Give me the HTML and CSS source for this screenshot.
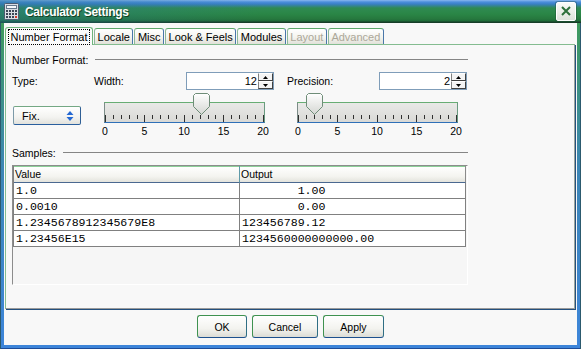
FILE: index.html
```html
<!DOCTYPE html>
<html lang="en">
<head>
    <meta charset="UTF-8">
    <title>Calculator Settings</title>
    <link rel="stylesheet" href="styles.css">
</head>
<body>
<div class="window">
    <div class="titlebar">
        <svg class="app-icon" width="17" height="17" viewBox="0 0 17 17">
            <rect x="1.5" y="0.5" width="14" height="16" rx="1" fill="#d9dee4" stroke="#4b5b70"/>
            <rect x="3.5" y="2.5" width="10" height="3" fill="#f5f8fb" stroke="#66788c"/>
            <g fill="#3c4656">
                <rect x="3" y="7" width="2" height="2"/><rect x="6" y="7" width="2" height="2"/><rect x="9" y="7" width="2" height="2"/><rect x="12" y="7" width="2" height="2"/>
                <rect x="3" y="10" width="2" height="2"/><rect x="6" y="10" width="2" height="2"/><rect x="9" y="10" width="2" height="2"/><rect x="12" y="10" width="2" height="2"/>
                <rect x="3" y="13" width="2" height="2"/><rect x="6" y="13" width="2" height="2"/><rect x="9" y="13" width="2" height="2"/>
            </g>
            <rect x="12" y="13" width="2" height="2" fill="#d83a2a"/>
        </svg>
        <span class="title">Calculator Settings</span>
        <button class="close-btn">
            <svg width="10" height="10" viewBox="0 0 10 10">
                <path d="M1 1L9 9M9 1L1 9" stroke="#2d6f3a" stroke-width="2"/>
            </svg>
        </button>
    </div>
    <div class="frame">
        <div class="client">
            <div class="tabs">
                <div class="tab tab-active"><span class="focus">Number Format</span></div>
                <div class="tab">Locale</div>
                <div class="tab">Misc</div>
                <div class="tab">Look &amp; Feels</div>
                <div class="tab">Modules</div>
                <div class="tab tab-disabled">Layout</div>
                <div class="tab tab-disabled">Advanced</div>
            </div>

            <div class="panel">
                <div class="panel-body">
                    <div class="group-title"><span>Number Format:</span><span class="rule"></span></div>

                    <div class="format-grid">
                        <div class="field"><span>Type:</span></div>
                        <div class="field">
                            <span>Width:</span>
                            <div class="spinner">
                                <span class="spinner-value">12</span>
                                <span class="spin-btns">
                                    <span class="spin-btn"><svg width="5" height="3"><path d="M0 3h5L2.5 0z"/></svg></span>
                                    <span class="spin-btn"><svg width="5" height="3"><path d="M0 0h5L2.5 3z"/></svg></span>
                                </span>
                            </div>
                        </div>
                        <div class="field">
                            <span>Precision:</span>
                            <div class="spinner">
                                <span class="spinner-value">2</span>
                                <span class="spin-btns">
                                    <span class="spin-btn"><svg width="5" height="3"><path d="M0 3h5L2.5 0z"/></svg></span>
                                    <span class="spin-btn"><svg width="5" height="3"><path d="M0 0h5L2.5 3z"/></svg></span>
                                </span>
                            </div>
                        </div>

                        <div class="combo">
                            <span>Fix.</span>
                            <svg width="8" height="12" viewBox="0 0 8 12">
                                <path d="M4 1L7.5 5H0.5z M4 11L7.5 7H0.5z" fill="#2468d2"/>
                            </svg>
                        </div>

                        <div class="slider">
                            <div class="slider-track">
                                <div class="ticks">
                                    <i class="major"></i><i></i><i></i><i></i><i></i>
                                    <i class="major"></i><i></i><i></i><i></i><i></i>
                                    <i class="major"></i><i></i><i></i><i></i><i></i>
                                    <i class="major"></i><i></i><i></i><i></i><i></i>
                                    <i class="major"></i>
                                </div>
                                <svg class="thumb" style="left: 88px" width="17" height="22" viewBox="0 0 17 22">
                                    <defs>
                                        <linearGradient id="thumbFill1" x1="0" y1="0" x2="0" y2="1">
                                            <stop offset="0" stop-color="#ffffff"/>
                                            <stop offset="1" stop-color="#d4d6d2"/>
                                        </linearGradient>
                                    </defs>
                                    <path d="M0.5 2.5L2.5 0.5H14.5L16.5 2.5V13.5L8.5 21.5L0.5 13.5Z" fill="url(#thumbFill1)" stroke="#6f8d78"/>
                                </svg>
                            </div>
                            <div class="slider-labels"><span>0</span><span>5</span><span>10</span><span>15</span><span>20</span></div>
                        </div>

                        <div class="slider">
                            <div class="slider-track">
                                <div class="ticks">
                                    <i class="major"></i><i></i><i></i><i></i><i></i>
                                    <i class="major"></i><i></i><i></i><i></i><i></i>
                                    <i class="major"></i><i></i><i></i><i></i><i></i>
                                    <i class="major"></i><i></i><i></i><i></i><i></i>
                                    <i class="major"></i>
                                </div>
                                <svg class="thumb" style="left: 8px" width="17" height="22" viewBox="0 0 17 22">
                                    <defs>
                                        <linearGradient id="thumbFill2" x1="0" y1="0" x2="0" y2="1">
                                            <stop offset="0" stop-color="#ffffff"/>
                                            <stop offset="1" stop-color="#d4d6d2"/>
                                        </linearGradient>
                                    </defs>
                                    <path d="M0.5 2.5L2.5 0.5H14.5L16.5 2.5V13.5L8.5 21.5L0.5 13.5Z" fill="url(#thumbFill2)" stroke="#6f8d78"/>
                                </svg>
                            </div>
                            <div class="slider-labels"><span>0</span><span>5</span><span>10</span><span>15</span><span>20</span></div>
                        </div>
                    </div>

                    <div class="group-title samples-title"><span>Samples:</span><span class="rule"></span></div>

                    <div class="table-pane">
                        <table class="samples">
                            <thead>
                                <tr><th class="col-value">Value</th><th>Output</th></tr>
                            </thead>
                            <tbody>
                                <tr><td>1.0</td><td>        1.00</td></tr>
                                <tr><td>0.0010</td><td>        0.00</td></tr>
                                <tr><td>1.2345678912345679E8</td><td>123456789.12</td></tr>
                                <tr><td>1.23456E15</td><td>1234560000000000.00</td></tr>
                            </tbody>
                        </table>
                    </div>
                </div>
            </div>

            <div class="buttons">
                <button class="btn">OK</button>
                <button class="btn">Cancel</button>
                <button class="btn">Apply</button>
            </div>
        </div>
    </div>
</div>
</body>
</html>
```

FILE: styles.css
```css
* {
    box-sizing: border-box;
}

html, body {
    margin: 0;
    background: #f8f8f8;
}

body {
    font-family: "Liberation Sans", Arial, sans-serif;
    font-size: 10.5px;
    color: #000;
}

.window {
    width: 581px;
    height: 349px;
    display: flex;
    flex-direction: column;
}

/* title bar */

.titlebar {
    height: 23px;
    flex: none;
    display: flex;
    align-items: center;
    padding: 0 5px 1px 3px;
    background:
        linear-gradient(to right, rgba(40, 118, 150, 0.45), rgba(40, 118, 150, 0) 45%),
        linear-gradient(to bottom, #8ab7ee 0, #4c8fdc 2px, #3a7fc6 4px, #2f8a52 8px, #2a8646 14px, #26783e 19px, #1f6a38 21px, #173d28 22px);
}

.app-icon {
    display: block;
    margin-top: 1px;
}

.title {
    margin-left: 5px;
    padding-top: 1px;
    font-size: 12px;
    font-weight: bold;
    letter-spacing: -0.3px;
    color: #fff;
    text-shadow: 1px 1px 0 #14401f;
}

.close-btn {
    margin-left: auto;
    width: 20px;
    height: 19px;
    padding: 0;
    display: flex;
    align-items: center;
    justify-content: center;
    border: 1px solid #fff;
    border-radius: 2px;
    background: linear-gradient(#fbfbf8, #dde2db);
    box-shadow: 0 0 0 1px rgba(30, 70, 50, 0.35);
}

/* frame and client area */

.frame {
    flex: 1;
    display: flex;
    padding: 0 4px 4px;
    background: linear-gradient(#3e9a5c, #3c86b6 45%, #3d85da);
    box-shadow: inset 1px 0 0 #2c5a6e, inset -1px 0 0 #2c5a6e, inset 0 -1px 0 #1d4c98;
}

.client {
    flex: 1;
    display: flex;
    flex-direction: column;
    background: #f8f8f8;
}

/* tabs */

.tabs {
    height: 21px;
    display: flex;
    align-items: flex-end;
    gap: 1px;
    padding-left: 1px;
    position: relative;
    z-index: 1;
}

.tab {
    height: 16px;
    line-height: 16px;
    padding: 0 2.5px;
    font-size: 11px;
    white-space: nowrap;
    border: 1px solid #8db89a;
    border-top-color: #5ea86c;
    border-right-color: #4a78aa;
    border-bottom: none;
    border-radius: 3px 3px 0 0;
    background: linear-gradient(#ffffff, #f4f4ef 55%, #e1e1d9);
}

.tab-active {
    height: 18px;
    margin-bottom: -1px;
    padding: 1px 2px 0;
    line-height: 14px;
    border-color: #6fb57c;
    background: #fbfbfb;
}

.tab-active .focus {
    display: block;
    padding: 0 1.5px;
    border: 1px dotted #000;
}

.tab-disabled {
    color: #aca899;
}

/* panel */

.panel {
    height: 265px;
    margin: 0 2px 0 1px;
    padding: 9px 0 0 6px;
    border: 1px solid #84bc90;
    border-right-color: #9aa39c;
    border-bottom-color: #9a9a9a;
    box-shadow: 1px 1px 0 #24507e;
    background: #f8f8f8;
}

.panel-body {
    width: 456px;
}

.group-title {
    display: flex;
    line-height: 13px;
    gap: 7px;
}

.rule {
    flex: 1;
    height: 1px;
    margin-top: 5px;
    background: #858585;
}

.samples-title {
    margin-top: 10px;
}

.format-grid {
    display: grid;
    grid-template-columns: 69px 180px 180px;
    column-gap: 13px;
    row-gap: 3px;
    margin-top: 5px;
}

.field {
    height: 18px;
    display: flex;
    align-items: center;
    justify-content: space-between;
}

/* spinner */

.spinner {
    width: 88px;
    height: 18px;
    display: flex;
    border: 1px solid #7f9db9;
    background: #fff;
}

.spinner-value {
    flex: 1;
    text-align: right;
    padding-right: 1px;
    font-size: 11px;
    line-height: 16px;
}

.spin-btns {
    width: 15px;
    display: flex;
    flex-direction: column;
}

.spin-btn {
    flex: 1;
    display: flex;
    align-items: center;
    justify-content: center;
    background: #f4f4f4;
    border: 1px solid;
    border-color: #fff #404040 #404040 #808080;
}

.spin-btn svg {
    display: block;
}

/* combo */

.combo {
    width: 68px;
    height: 19px;
    margin: 13px 0 0 1px;
    padding: 0 6px 0 8px;
    display: flex;
    align-items: center;
    justify-content: space-between;
    font-size: 11px;
    border: 1px solid;
    border-color: #74a884 #2f5f95 #2a5f9e #7c9aa8;
    border-radius: 2px;
    background: linear-gradient(#ffffff, #f3f3f0 60%, #e2e2dc);
}

/* slider */

.slider {
    padding: 9px 0 0 10px;
}

.slider-track {
    position: relative;
    width: 161px;
    height: 21px;
    border: 1px solid;
    border-color: #68ad74 #6a9a80 #2f70b8 #7c8c88;
    background: linear-gradient(#e9e9e7, #d9d9d6);
}

.ticks {
    display: flex;
    justify-content: space-between;
    align-items: flex-start;
    margin-top: 12px;
}

.ticks i {
    width: 1px;
    height: 4px;
    background: #303030;
}

.ticks i.major {
    height: 7px;
}

.thumb {
    position: absolute;
    top: -10px;
    display: block;
}

.slider-labels {
    width: 158px;
    display: flex;
    justify-content: space-between;
    margin: 2px 0 0 1px;
    line-height: 12px;
}

.slider-labels span {
    width: 0;
    display: flex;
    justify-content: center;
    white-space: nowrap;
}

/* samples table */

.table-pane {
    height: 120px;
    margin-top: 5px;
    border: 1px solid;
    border-color: #8c8c8c #fff #fff #8c8c8c;
    background: #f6f6f6;
}

.samples {
    width: 453px;
    table-layout: fixed;
    border-collapse: separate;
    border-spacing: 0;
    border-left: 1px solid #808080;
}

.samples th {
    height: 17px;
    padding: 0 0 0 1px;
    text-align: left;
    font-weight: normal;
    line-height: 16px;
    border-right: 1px solid #8a8a8a;
    border-bottom: 1px solid #4a6890;
    background: linear-gradient(#ffffff, #f4f4f0 65%, #e3e3dc);
    box-shadow: inset 0 1px 0 #8ccf98;
}

.samples th.col-value {
    width: 226px;
    border-right-color: #5f9aa8;
}

.samples td {
    height: 16px;
    padding: 1px 0 0 2px;
    font-family: "Liberation Mono", "Courier New", monospace;
    font-size: 11.6px;
    line-height: 14px;
    white-space: pre;
    background: #fff;
    border-right: 1px solid #808080;
    border-bottom: 1px solid #808080;
}

/* dialog buttons */

.buttons {
    display: flex;
    justify-content: center;
    gap: 5px;
    margin-top: 6px;
}

.btn {
    height: 23px;
    min-width: 49px;
    padding: 0 16px;
    font-family: "Liberation Sans", Arial, sans-serif;
    font-size: 10.5px;
    color: #000;
    border: 1px solid #3f9250;
    border-bottom-color: #1d508e;
    border-right-color: #2f6e84;
    border-radius: 3px;
    background: linear-gradient(#ffffff, #f3f3ef 60%, #dcdcd5);
}
```
